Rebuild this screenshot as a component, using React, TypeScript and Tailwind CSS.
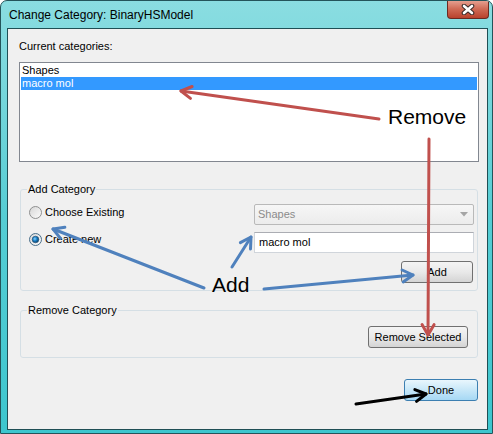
import React from "react";

type Pt = [number, number];

function Arrow({ from, to, color, w = 3, wing = 12 }: { from: Pt; to: Pt; color: string; w?: number; wing?: number }) {
  const [x1, y1] = from;
  const [x2, y2] = to;
  const a = Math.atan2(y2 - y1, x2 - x1);
  const s = Math.PI / 6;
  const l: Pt = [x2 - wing * Math.cos(a - s), y2 - wing * Math.sin(a - s)];
  const r: Pt = [x2 - wing * Math.cos(a + s), y2 - wing * Math.sin(a + s)];
  return (
    <g stroke={color} strokeWidth={w} fill="none" strokeLinecap="round" strokeLinejoin="round">
      <line x1={x1} y1={y1} x2={x2} y2={y2} />
      <polyline points={`${l[0]},${l[1]} ${x2},${y2} ${r[0]},${r[1]}`} />
    </g>
  );
}

function Radio({ checked }: { checked?: boolean }) {
  return (
    <svg width="13" height="13" viewBox="0 0 13 13" className="shrink-0">
      <defs>
        <linearGradient id="rg" x1="0" y1="0" x2="1" y2="1">
          <stop offset="0" stopColor="#d5d5d5" />
          <stop offset="1" stopColor="#fdfdfd" />
        </linearGradient>
        <radialGradient id="dot" cx="0.4" cy="0.4" r="0.6">
          <stop offset="0" stopColor="#8fd3ff" />
          <stop offset="0.5" stopColor="#1b82c9" />
          <stop offset="1" stopColor="#07406c" />
        </radialGradient>
      </defs>
      <circle cx="6.5" cy="6.5" r="6" fill="url(#rg)" stroke={checked ? "#4a6f8a" : "#8e8f8f"} strokeWidth="1" />
      {checked && <circle cx="6.5" cy="6.5" r="3.3" fill="url(#dot)" stroke="#2a5578" strokeWidth="0.7" />}
    </svg>
  );
}

export default function App() {
  return (
    <div className="relative w-[493px] h-[434px] overflow-hidden rounded-t-[7px] border border-[#24545a] bg-gradient-to-b from-[#8adde1] via-[#55cdd4] to-[#3cc6ce] flex flex-col font-['Liberation_Sans',Arial,sans-serif] text-[11px] text-black">
      {/* Title bar */}
      <div className="h-[27px] flex items-start justify-between shrink-0">
        <div className="pl-[8px] pt-[7px] text-[12px] leading-[14px] text-black">Change Category: BinaryHSModel</div>
        <div className="mr-[3px] -mt-[1px] w-[42px] h-[19px] rounded-b-[4px] border border-[#6b2a22] border-t-0 bg-gradient-to-b from-[#e7a596] via-[#cf6a55] to-[#b9412c] flex items-center justify-center">
          <svg width="14" height="11" viewBox="0 0 14 11">
            <path d="M3 2 L11 9 M11 2 L3 9" stroke="#3a2a28" strokeWidth="4.6" strokeLinecap="round" />
            <path d="M3 2 L11 9 M11 2 L3 9" stroke="#ffffff" strokeWidth="2.6" strokeLinecap="round" />
          </svg>
        </div>
      </div>

      {/* Client area */}
      <div className="flex-1 ml-[6px] mr-[4px] mb-[3px] border border-[#1f4f55] bg-[#f0f0f0] flex flex-col">
        <div className="pl-[11px] pt-[10px] leading-[14px]">Current categories:</div>
        <div className="ml-[11px] mt-[9px] w-[460px] h-[100px] border border-[#828790] bg-white p-[1px] shrink-0">
          <div className="h-[13px] leading-[13px] pl-[1px]">Shapes</div>
          <div className="h-[13px] leading-[13px] pl-[1px] bg-[#3399ff] text-white">macro mol</div>
        </div>

        <fieldset className="ml-[12px] mt-[20px] w-[458px] border border-[#d5dfe5] rounded-[3px] shrink-0">
          <legend className="ml-[6px] px-[1px] leading-[14px]">Add Category</legend>
          <div className="flex pb-[7px]">
            <div className="w-[233px] pl-[8px] pt-[8px] flex flex-col gap-[11px]">
              <label className="flex items-center gap-[3px] h-[16px]">
                <Radio />
                <span>Choose Existing</span>
              </label>
              <label className="flex items-center gap-[3px] h-[16px]">
                <Radio checked />
                <span>Create new</span>
              </label>
            </div>
            <div className="w-[220px] pt-[8px] flex flex-col">
              <div className="h-[21px] border border-[#b9b9b9] rounded-[2px] bg-gradient-to-b from-[#f6f6f6] to-[#ececec] flex items-center justify-between pl-[3px] pr-[5px] text-[#8b8b8b]">
                <span>Shapes</span>
                <svg width="8" height="5" viewBox="0 0 8 5"><path d="M0 0 L8 0 L4 4.5 Z" fill="#a5a5a5" /></svg>
              </div>
              <div className="mt-[7px] h-[21px] border border-[#d0d5db] border-t-[#abadb3] bg-white flex items-center pl-[4px]">macro mol</div>
              <div className="mt-[8px] flex justify-end pr-[1px]">
                <button className="w-[72px] h-[22px] border border-[#707070] rounded-[3px] bg-gradient-to-b from-[#f4f4f4] via-[#e9e9e9] to-[#d4d4d4] text-[11px] leading-[14px]">Add</button>
              </div>
            </div>
          </div>
        </fieldset>

        <fieldset className="ml-[12px] mt-[12px] w-[458px] border border-[#d5dfe5] rounded-[3px] shrink-0">
          <legend className="ml-[6px] px-[1px] leading-[14px]">Remove Category</legend>
          <div className="flex justify-end pt-[9px] pb-[9px] pr-[9px]">
            <button className="w-[100px] h-[22px] border border-[#707070] rounded-[3px] bg-gradient-to-b from-[#f4f4f4] via-[#e9e9e9] to-[#d4d4d4] text-[11px] leading-[14px]">Remove Selected</button>
          </div>
        </fieldset>

        <div className="mt-[21px] flex justify-end pr-[9px]">
          <button className="w-[74px] h-[22px] border border-[#3c7fb1] rounded-[3px] bg-gradient-to-b from-[#e9f6fd] via-[#c7e7f8] to-[#a6d8f4] text-[11px] leading-[14px]">Done</button>
        </div>
      </div>

      {/* Annotations */}
      <svg className="absolute left-0 top-0 pointer-events-none" width="493" height="434" viewBox="-1 -1 493 434">
        <Arrow from={[377, 117]} to={[179, 89]} color="#c0504d" />
        <Arrow from={[427, 137]} to={[426, 333]} color="#c0504d" />
        <Arrow from={[202, 286]} to={[51, 227]} color="#4f81bd" />
        <Arrow from={[230, 265]} to={[249, 235]} color="#4f81bd" />
        <Arrow from={[262, 287]} to={[411, 273]} color="#4f81bd" />
        <Arrow from={[354, 402]} to={[424, 392]} color="#000000" />
      </svg>
      <span className="absolute left-[387px] top-[105px] text-[21px] leading-[21px] text-black">Remove</span>
      <span className="absolute left-[211px] top-[273px] text-[21px] leading-[21px] text-black">Add</span>
    </div>
  );
}
